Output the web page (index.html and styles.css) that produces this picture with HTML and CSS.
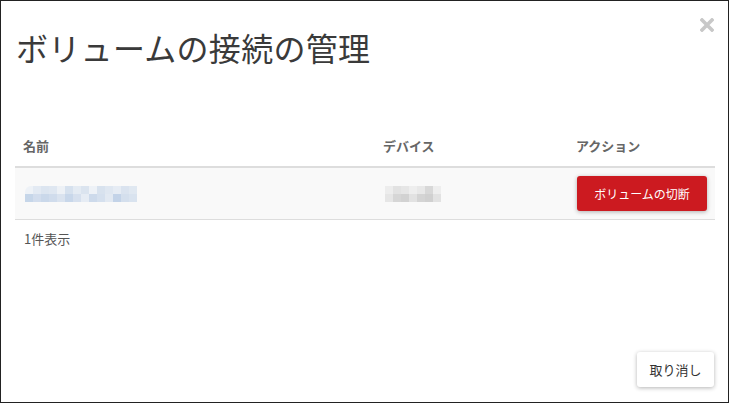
FILE: index.html
```html
<html lang="ja">
<head>
    <meta charset="UTF-8">
    <title>ボリュームの接続の管理</title>
    <link rel="stylesheet" href="styles.css">
</head>
<body>
    <div id="modal">
        <div id="close">
            <svg width="14" height="14" viewBox="0 0 14 14"><path d="M2 2L12 12M12 2L2 12" stroke="#c8c8c8" stroke-width="3.6" stroke-linecap="square"/></svg>
        </div>
        <div id="header">
            <h3>ボリュームの接続の管理</h3>
        </div>
        <div id="body">
            <table id="list">
                <thead>
                    <tr>
                        <th class="col-name">名前</th>
                        <th class="col-device">デバイス</th>
                        <th class="col-action">アクション</th>
                    </tr>
                </thead>
                <tbody>
                    <tr>
                        <td><div class="blur blur-name"><span></span><span></span><span></span><span></span><span></span><span></span><span></span><span></span><span></span><span></span><span></span><span></span><span></span><span></span><span></span><span></span><span></span><span></span><span></span><span></span><span></span><span></span><span></span><span></span><span></span><span></span><span></span><span></span></div></td>
                        <td><div class="blur blur-device"><span></span><span></span><span></span><span></span><span></span><span></span><span></span><span></span><span></span><span></span><span></span><span></span><span></span><span></span></div></td>
                        <td><button class="btn btn-danger">ボリュームの切断</button></td>
                    </tr>
                </tbody>
            </table>
            <p id="count">1件表示</p>
        </div>
        <div id="footer">
            <button class="btn btn-default">取り消し</button>
        </div>
    </div>
</body>
</html>
```

FILE: styles.css
```css
*{
    margin: 0;
    padding: 0;
    box-sizing: border-box;
}
body{
    font-family: "Noto Sans CJK JP", "Liberation Sans", sans-serif;
    color: #333;
}

#modal{
    width: 729px;
    height: 403px;
    border: 1px solid #222;
    background: #fff;
    position: relative;
    display: flex;
    flex-direction: column;
}

#close{
    position: absolute;
    top: 17px;
    right: 14px;
    width: 14px;
    height: 14px;
}
#close svg{
    display: block;
}

#header{
    padding: 28px 15px 0;
}
#header h3{
    font-size: 32px;
    line-height: 36px;
    font-weight: normal;
    color: #3a3a3a;
    letter-spacing: 0.3px;
}

#body{
    flex: 1;
    padding: 65px 13px 0 14px;
}

#list{
    width: 100%;
    border-collapse: collapse;
    font-size: 13px;
}
#list th{
    text-align: left;
    color: #666;
    font-weight: bold;
    padding: 6px 8px 10px;
    line-height: 20px;
    border-bottom: 2px solid #ddd;
}
.col-name{
    width: 360px;
}
.col-device{
    width: 193px;
}
#list td{
    background: #f9f9f9;
    padding: 8px 8px 8px 8px;
    border-bottom: 1px solid #ddd;
    vertical-align: middle;
}
#list td:last-child{
    padding-left: 9px;
}

.blur{
    display: grid;
    grid-auto-rows: 8px;
}
.blur span{
    display: block;
}
.blur-name{
    width: 112px;
    grid-template-columns: repeat(14, 8px);
    margin-left: 2px;
}
.blur-name span:nth-child(1){ background: #eef2f7; border-top-left-radius: 6px; }
.blur-name span:nth-child(2){ background: #e3eaf3; }
.blur-name span:nth-child(3){ background: #dce5f0; }
.blur-name span:nth-child(4){ background: #dfe7f1; }
.blur-name span:nth-child(5){ background: #edf1f6; }
.blur-name span:nth-child(6){ background: #d6e1ee; }
.blur-name span:nth-child(7){ background: #e4ebf3; }
.blur-name span:nth-child(8){ background: #dbe4ef; }
.blur-name span:nth-child(9){ background: #eef2f7; }
.blur-name span:nth-child(10){ background: #d8e2ee; }
.blur-name span:nth-child(11){ background: #dfe7f1; }
.blur-name span:nth-child(12){ background: #e6ecf4; }
.blur-name span:nth-child(13){ background: #dae3ef; }
.blur-name span:nth-child(14){ background: #e0e8f1; }
.blur-name span:nth-child(15){ background: #c6d6e9; }
.blur-name span:nth-child(16){ background: #d2dded; }
.blur-name span:nth-child(17){ background: #cad8ea; }
.blur-name span:nth-child(18){ background: #d0dcec; }
.blur-name span:nth-child(19){ background: #dae3ef; }
.blur-name span:nth-child(20){ background: #c8d7ea; }
.blur-name span:nth-child(21){ background: #d6e0ee; }
.blur-name span:nth-child(22){ background: #e6ecf4; }
.blur-name span:nth-child(23){ background: #cddaeb; }
.blur-name span:nth-child(24){ background: #d5e0ee; }
.blur-name span:nth-child(25){ background: #e2e9f2; }
.blur-name span:nth-child(26){ background: #c3d3e8; }
.blur-name span:nth-child(27){ background: #d4dfed; }
.blur-name span:nth-child(28){ background: #d9e3ef; }

.blur-device{
    width: 56px;
    grid-template-columns: repeat(7, 8px);
    margin-left: 2px;
}
.blur-device span:nth-child(1){ background: #ededed; }
.blur-device span:nth-child(2){ background: #e2e2e2; }
.blur-device span:nth-child(3){ background: #e6e6e6; }
.blur-device span:nth-child(4){ background: #eeeeee; }
.blur-device span:nth-child(5){ background: #e8e8e8; }
.blur-device span:nth-child(6){ background: #d8d8d8; }
.blur-device span:nth-child(7){ background: #eeeeee; }
.blur-device span:nth-child(8){ background: #e6e6e6; }
.blur-device span:nth-child(9){ background: #d6d6d6; }
.blur-device span:nth-child(10){ background: #d2d2d2; }
.blur-device span:nth-child(11){ background: #e2e2e2; }
.blur-device span:nth-child(12){ background: #d4d4d4; }
.blur-device span:nth-child(13){ background: #d0d0d0; }
.blur-device span:nth-child(14){ background: #e2e2e2; }

.btn{
    font-family: "Noto Sans CJK JP", "Liberation Sans", sans-serif;
    height: 35px;
    border: none;
    border-radius: 3px;
    cursor: pointer;
    box-shadow: 0 1px 4px rgba(0, 0, 0, 0.3);
}
.btn-danger{
    width: 130px;
    background: #cc1a20;
    color: #fff;
    font-size: 12px;
}
.btn-default{
    width: 77px;
    background: #fff;
    color: #333;
    font-size: 13px;
}

#count{
    font-size: 13px;
    color: #555;
    padding: 9px 9px;
    line-height: 20px;
}

#footer{
    display: flex;
    justify-content: flex-end;
    padding: 0 14px 15px;
}
```
